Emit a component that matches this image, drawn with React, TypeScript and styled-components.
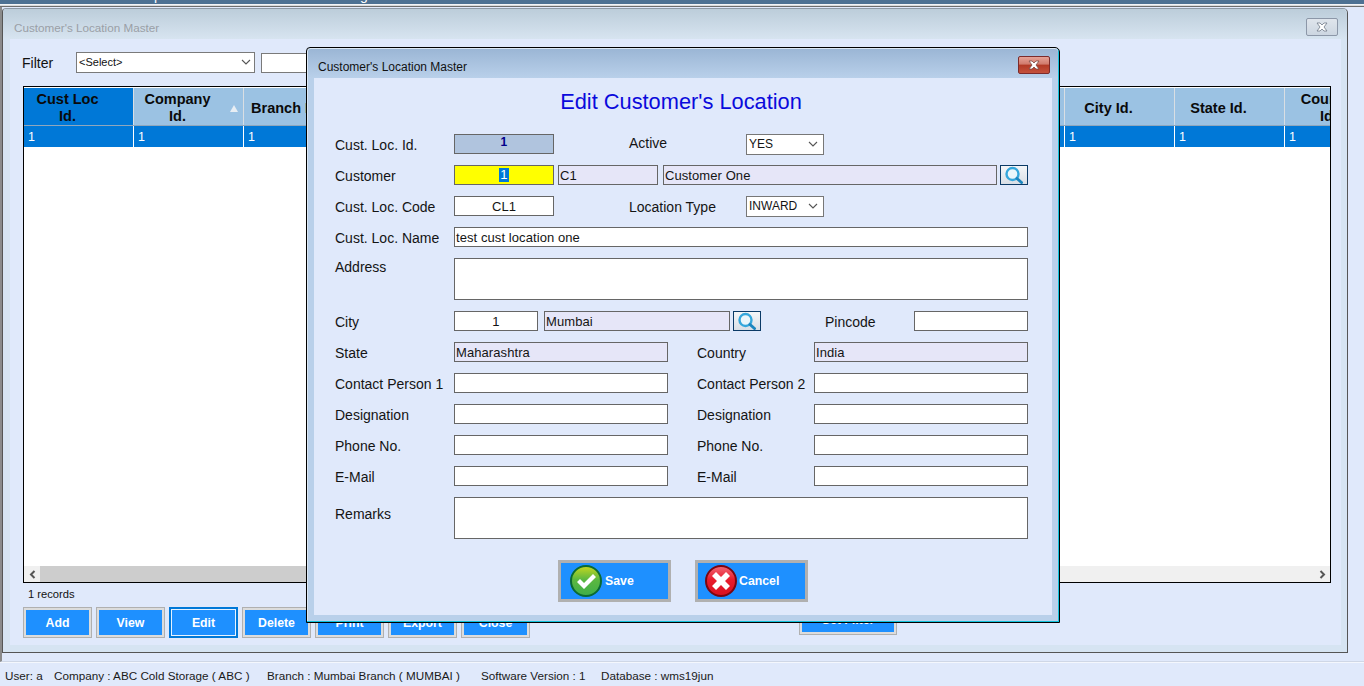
import React from "react";
import styled, { createGlobalStyle } from "styled-components";

const Global = createGlobalStyle`
  html, body { margin: 0; padding: 0; width: 1364px; height: 686px; overflow: hidden; background: #e0e9fb; }
  body, button { font-family: "Liberation Sans", Arial, sans-serif; }
  * { box-sizing: border-box; }
`;

const Page = styled.div`
  width: 1364px; height: 686px; display: flex; flex-direction: column; position: relative; overflow: hidden;
  background: #e0e9fb; color: #111;
`;
const TopStrip = styled.div`
  height: 4px; background: #4d7193; overflow: hidden; color: #fff; font-size: 14px; line-height: 14px; flex: none;
`;
const StripText = styled.div<{ $left: number }>`
  display: flex; margin-top: -12px; height: 16px; padding-left: ${(p) => p.$left}px;
  span { width: 206px; }
`;
const StripEdge = styled.div`
  height: 3px; flex: none; background: linear-gradient(#f2f4f6 0 1px, #d8dadc 1px 2px, #6e6e6e 2px);
`;
const Workspace = styled.div`
  flex: none; height: 655px; border-left: 2px solid #8a8a8a; padding-top: 1px; border-bottom: 1px solid #cfd7e6;
`;
const Window = styled.div`
  width: 1346px; height: 645px; border: 1px solid #555; border-top-color: #8d9aa6; border-radius: 4px 5px 0 0;
  background: #d6e4f2; display: flex; flex-direction: column; padding: 0 6px 7px 7px;
`;
const WindowTitleBar = styled.div`
  height: 30px; flex: none; margin: 0 -6px 0 -7px; padding: 6px 9px 0 11px; display: flex; align-items: center; justify-content: space-between;
  background: linear-gradient(#bccdda, #d7e4f0); border-radius: 4px 5px 0 0;
  font-size: 11.7px; color: #9a9fa6;
`;
const GhostClose = styled.div`
  width: 32px; height: 18px; border: 1px solid #8c97a8; border-radius: 2px; background: linear-gradient(#dfe5ec, #ccd6e1);
  display: flex; align-items: center; justify-content: center; margin-top: -1px;
`;
const WindowBody = styled.div`
  flex: 1; background: #e0e9fb; padding: 13px 9px 0 12px; display: flex; flex-direction: column; min-height: 0;
`;
const FilterRow = styled.div`
  display: flex; align-items: center; height: 21px; font-size: 14px; flex: none;
`;
const FilterLabel = styled.div`
  width: 54px;
`;
const FilterSelect = styled.div`
  width: 179px; height: 21px; border: 1px solid #7a7a7a; background: #fff; font-size: 11px; padding: 0 3px 2px 2px; display: flex; align-items: center; justify-content: space-between;
`;
const FilterInput = styled.div`
  width: 200px; height: 20px; margin-left: 6px; border: 1px solid #7a7a7a; background: #fff;
`;
const GridFrame = styled.div`
  flex: none; height: 497px; margin: 13px 0 0 1px; width: 1308px; border: 1px solid #000; padding-top: 1px; background: #fff; display: flex; flex-direction: column; overflow: hidden;
`;
const HeadRow = styled.div`
  display: flex; height: 38px; flex: none; border-bottom: 1px solid #8fa7bd; background: #9bc2e3;
`;
const HeadCell = styled.div<{ $w: number; $active?: boolean; $pad: number }>`
  width: ${(p) => p.$w}px; flex: none; position: relative; border-right: 1px solid #d9dee3; background: ${(p) => (p.$active ? "#0078d7" : "#9bc2e3")};
  font-size: 14.5px; font-weight: 700; line-height: 17px; text-align: center; display: flex; align-items: center; justify-content: center; color: #0a0a0a; padding: 3px ${(p) => p.$pad}px 0 0; white-space: pre-line; overflow: hidden;
`;
const SortMark = styled.span`
  position: absolute; right: 5px; top: 17px; width: 0; height: 0; border: 4px solid transparent; border-top: 0; border-bottom: 7px solid #e8eef4;
`;
const DataRow = styled.div`
  display: flex; height: 21px; flex: none; background: #0078d7;
`;
const DataCell = styled.div<{ $w: number }>`
  width: ${(p) => p.$w}px; flex: none; border-right: 1px solid #fff; color: #fff; font-size: 12.5px; padding: 4px 0 0 4px;
`;
const GridFill = styled.div`flex: 1;`;
const ScrollBar = styled.div`
  height: 16px; flex: none; background: #f0f0f0; display: flex; align-items: center; justify-content: space-between;
`;
const ScrollThumbZone = styled.div`
  display: flex; align-items: center; height: 16px;
`;
const ScrollThumb = styled.div`
  width: 600px; height: 16px; background: #cdcdcd;
`;
const ScrollArrow = styled.div`
  width: 16px; height: 16px; display: flex; align-items: center; justify-content: center;
`;
const Records = styled.div`
  font-size: 11.2px; height: 24px; padding: 5px 0 0 5px; flex: none; margin-left: 1px; color: #111;
`;
const Footer = styled.div`
  display: flex; align-items: flex-end; gap: 4px; margin-left: 1px; height: 31px;
`;
const ActionButton = styled.button<{ $focus?: boolean; $w?: number; $after?: number; $lift?: number }>`
  width: ${(p) => p.$w ?? 69}px; height: 31px; flex: none; border: ${(p) => (p.$focus ? "2px solid #0078d7" : "1px solid #b0b0b0")};
  box-shadow: ${(p) => (p.$focus ? "inset 0 0 0 1px #e6f2ff" : "inset 0 0 0 2px #dcdcdc")};
  background: #1e90ff; color: #fff; font-weight: 700; font-size: 12.3px; padding: 0;
  margin-left: ${(p) => p.$after ?? 0}px; margin-bottom: ${(p) => p.$lift ?? 0}px;
`;
const StatusBar = styled.div`
  flex: 1; display: flex; align-items: center; font-size: 11.7px; padding: 1px 0 0 5px; color: #1a1a1a; border-top: 1px solid #f4f7fd;
`;
const StatusItem = styled.span<{ $w: number }>`
  width: ${(p) => p.$w}px; flex: none; white-space: nowrap;
`;

const Dialog = styled.div`
  position: absolute; left: 306px; top: 47px; width: 754px; height: 576px; border: 1px solid #000; border-radius: 4px 5px 0 0;
  background: #b9d0ea; box-shadow: inset -1px -1px 0 #12c2dc, inset 1px 1px 0 #dce8f4; display: flex; flex-direction: column; padding: 0 7px 7px 7px;
`;
const DialogTitleBar = styled.div`
  height: 29px; flex: none; margin: 1px -6px 0 -6px; padding: 7px 8px 0 10px; display: flex; align-items: center; justify-content: space-between;
  background: linear-gradient(#9bb6d5, #b9d0ea); font-size: 12px; color: #111; border-radius: 3px 4px 0 0;
`;
const RedClose = styled.div`
  width: 32px; height: 18px; margin-top: -4px; border: 1px solid #7c2b2b; border-radius: 2px; background: linear-gradient(#e6a296 0, #d07a6c 45%, #b23a26 50%, #c4513c 100%);
  display: flex; align-items: center; justify-content: center;
`;
const Form = styled.div`
  flex: 1; background: #e0e9fb; padding: 12px 24px 0 21px; display: flex; flex-direction: column; min-height: 0;
`;
const Heading = styled.h1`
  margin: 0 0 20px; height: 24px; font-size: 21.8px; line-height: 24px; font-weight: 400; color: #0a0adc; text-align: center; padding-right: 1px;
`;
const Rows = styled.div`
  display: flex; flex-direction: column; gap: 11px;
`;
const Row = styled.div<{ $h?: number; $top?: boolean }>`
  display: flex; height: ${(p) => p.$h ?? 20}px; align-items: ${(p) => (p.$top ? "flex-start" : "center")};
`;
const Label = styled.div<{ $w?: number; $at?: number; $lift?: number; $drop?: number }>`
  width: ${(p) => p.$w ?? 119}px; flex: none; margin-left: ${(p) => p.$at ?? 0}px; font-size: 14px; line-height: 16px; white-space: nowrap; color: #141414;
  transform: translateY(${(p) => (p.$drop ?? 1) - (p.$lift ?? 0)}px);
`;
const Field = styled.div<{ $w: number; $h?: number; $tone?: "white" | "lilac" | "yellow" | "steel"; $center?: boolean; $at?: number }>`
  width: ${(p) => p.$w}px; height: ${(p) => p.$h ?? 20}px; flex: none; margin-left: ${(p) => p.$at ?? 0}px;
  border: 1px solid #666;
  background: ${(p) => ({ white: "#fff", lilac: "#e6e6f8", yellow: "#ffff00", steel: "#b0c4de" }[p.$tone ?? "white"])};
  font-size: 13px; letter-spacing: 0.08px; line-height: 20px; padding: 0 1px; white-space: nowrap; overflow: hidden; color: #141414;
  text-align: ${(p) => (p.$center ? "center" : "left")};
`;
const IdValue = styled.span`
  color: #00008b; font-weight: 700; font-size: 12px; position: relative; top: -3px;
`;
const Selected = styled.span`
  display: inline-block; height: 14px; line-height: 14px; vertical-align: 1px; background: #0078d7; color: #fff; padding: 0 1px;
`;
const Combo = styled.div<{ $at?: number }>`
  width: 78px; height: 21px; flex: none; margin-left: ${(p) => p.$at ?? 0}px; border: 1px solid #777; background: #fff; font-size: 12px; padding: 0 5px 0 2px;
  display: flex; align-items: center; justify-content: space-between; color: #141414;
`;
const LookupButton = styled.div<{ $at: number }>`
  width: 28px; height: 20px; flex: none; margin-left: ${(p) => p.$at}px; border: 1px solid #0b3a66; background: linear-gradient(#f4f6f8, #d9dfe6);
  display: flex; align-items: center; justify-content: center;
`;
const DialogActions = styled.div`
  display: flex; gap: 24px; margin: 21px 0 0 223px;
`;
const DialogButton = styled.button<{ $pad: number; $gap: number }>`
  width: 113px; height: 42px; border: 3px solid #b0b0b0; background: #1e90ff; color: #fff; font-weight: 700; font-size: 12.3px; padding: 0 0 0 ${(p) => p.$pad}px;
  display: flex; align-items: center; gap: ${(p) => p.$gap}px;
`;

const X = ({ c = "#fff", s = "#6b7280" }: { c?: string; s?: string }) => (
  <svg width="14" height="10" viewBox="0 0 14 10">
    <path d="M2 1h3l2 2 2-2h3L9 5l3 4H9L7 7 5 9H2l3-4z" fill={c} stroke={s} strokeWidth="0.8" />
  </svg>
);
const Chevron = () => (
  <svg width="10" height="6" viewBox="0 0 10 6"><path d="M1 1l4 4 4-4" fill="none" stroke="#555" strokeWidth="1.1" /></svg>
);
const Lens = () => (
  <svg width="24" height="18" viewBox="0 0 24 18">
    <circle cx="10.5" cy="8" r="6" fill="#eaf6fb" stroke="#35a7dc" strokeWidth="2.4" />
    <path d="M15 12.5l4.5 4" stroke="#1c86bf" strokeWidth="3" strokeLinecap="round" />
  </svg>
);
const SaveIcon = () => (
  <svg width="32" height="32" viewBox="0 0 32 32">
    <defs>
      <linearGradient id="gs" x1="0" y1="0" x2="0" y2="1">
        <stop offset="0" stopColor="#c8d81e" /><stop offset="0.45" stopColor="#5cb840" /><stop offset="1" stopColor="#3fae48" />
      </linearGradient>
    </defs>
    <circle cx="16" cy="16" r="15" fill="url(#gs)" stroke="#0b6a32" strokeWidth="2" />
    <path d="M7 17l3-3 4 4 9-9 3 3-12 12z" fill="#fff" />
  </svg>
);
const CancelIcon = () => (
  <svg width="32" height="32" viewBox="0 0 32 32">
    <defs>
      <linearGradient id="gc" x1="0" y1="0" x2="0" y2="1">
        <stop offset="0" stopColor="#f26a78" /><stop offset="0.45" stopColor="#e81c2c" /><stop offset="1" stopColor="#d81020" />
      </linearGradient>
    </defs>
    <circle cx="16" cy="16" r="15" fill="url(#gc)" stroke="#7a0610" strokeWidth="2" />
    <path d="M11 7l5 5 5-5 4 4-5 5 5 5-4 4-5-5-5 5-4-4 5-5-5-5z" fill="#fff" />
  </svg>
);

const columns: { w: number; title?: string; active?: boolean; sort?: boolean; pad?: number }[] = [
  { w: 110, title: "Cust Loc\nId.", active: true },
  { w: 110, title: "Company\nId.", sort: true },
  { w: 110, title: "Branch Id.", pad: 24 },
  { w: 711 },
  { w: 110, title: "City Id." },
  { w: 110, title: "State Id." },
  { w: 110, title: "Country\nId." },
];

const footerLabels = ["Add", "View", "Edit", "Delete", "Print", "Export", "Close"];

export default function App() {
  return (
    <Page>
      <Global />
      <TopStrip>
        <StripText $left={154}><span>p</span><span>g</span></StripText>
      </TopStrip>
      <StripEdge />
      <Workspace>
        <Window>
          <WindowTitleBar>
            <span>Customer's Location Master</span>
            <GhostClose><X s="#707a88" /></GhostClose>
          </WindowTitleBar>
          <WindowBody>
            <FilterRow>
              <FilterLabel>Filter</FilterLabel>
              <FilterSelect><span>&lt;Select&gt;</span><Chevron /></FilterSelect>
              <FilterInput />
            </FilterRow>
            <GridFrame>
              <HeadRow>
                {columns.map((c, i) => (
                  <HeadCell key={i} $w={c.w} $active={c.active} $pad={c.pad ?? 22}>
                    {c.title}
                    {c.sort && <SortMark />}
                  </HeadCell>
                ))}
              </HeadRow>
              <DataRow>
                {columns.map((c, i) => (
                  <DataCell key={i} $w={c.w}>{c.title ? "1" : ""}</DataCell>
                ))}
              </DataRow>
              <GridFill />
              <ScrollBar>
                <ScrollThumbZone>
                  <ScrollArrow>
                    <svg width="7" height="9" viewBox="0 0 7 9"><path d="M5.5 1L2 4.5 5.5 8" fill="none" stroke="#555" strokeWidth="2" /></svg>
                  </ScrollArrow>
                  <ScrollThumb />
                </ScrollThumbZone>
                <ScrollArrow>
                  <svg width="7" height="9" viewBox="0 0 7 9"><path d="M1.5 1L5 4.5 1.5 8" fill="none" stroke="#555" strokeWidth="2" /></svg>
                </ScrollArrow>
              </ScrollBar>
            </GridFrame>
            <Records>1 records</Records>
            <Footer>
              {footerLabels.map((l) => (
                <ActionButton key={l} $focus={l === "Edit"}>{l}</ActionButton>
              ))}
              <ActionButton $w={98} $after={265} $lift={3}>Set Filter</ActionButton>
            </Footer>
          </WindowBody>
        </Window>
      </Workspace>
      <StatusBar>
        <StatusItem $w={49}>User: a</StatusItem>
        <StatusItem $w={213}>Company : ABC Cold Storage ( ABC )</StatusItem>
        <StatusItem $w={214}>Branch : Mumbai Branch ( MUMBAI )</StatusItem>
        <StatusItem $w={120}>Software Version : 1</StatusItem>
        <StatusItem $w={130}>Database : wms19jun</StatusItem>
      </StatusBar>

      <Dialog>
        <DialogTitleBar>
          <span>Customer's Location Master</span>
          <RedClose><X s="#7a4a44" /></RedClose>
        </DialogTitleBar>
        <Form>
          <Heading>Edit Customer's Location</Heading>
          <Rows>
            <Row>
              <Label>Cust. Loc. Id.</Label>
              <Field $w={100} $tone="steel" $center><IdValue>1</IdValue></Field>
              <Label $w={117} $at={75} $lift={2}>Active</Label>
              <Combo><span>YES</span><Chevron /></Combo>
            </Row>
            <Row>
              <Label>Customer</Label>
              <Field $w={100} $tone="yellow" $center><Selected>1</Selected></Field>
              <Field $w={100} $at={4} $tone="lilac">C1</Field>
              <Field $w={334} $at={5} $tone="lilac">Customer One</Field>
              <LookupButton $at={3}><Lens /></LookupButton>
            </Row>
            <Row>
              <Label>Cust. Loc. Code</Label>
              <Field $w={100} $center>CL1</Field>
              <Label $w={117} $at={75}>Location Type</Label>
              <Combo><span>INWARD</span><Chevron /></Combo>
            </Row>
            <Row>
              <Label>Cust. Loc. Name</Label>
              <Field $w={574}>test cust location one</Field>
            </Row>
            <Row $h={42} $top>
              <Label>Address</Label>
              <Field $w={574} $h={42} />
            </Row>
            <Row>
              <Label>City</Label>
              <Field $w={84} $center>1</Field>
              <Field $w={186} $at={6} $tone="lilac">Mumbai</Field>
              <LookupButton $at={3}><Lens /></LookupButton>
              <Label $w={89} $at={64}>Pincode</Label>
              <Field $w={114} />
            </Row>
            <Row>
              <Label>State</Label>
              <Field $w={214} $tone="lilac">Maharashtra</Field>
              <Label $w={117} $at={29}>Country</Label>
              <Field $w={214} $tone="lilac">India</Field>
            </Row>
            <Row>
              <Label>Contact Person 1</Label>
              <Field $w={214} />
              <Label $w={117} $at={29}>Contact Person 2</Label>
              <Field $w={214} />
            </Row>
            <Row>
              <Label>Designation</Label>
              <Field $w={214} />
              <Label $w={117} $at={29}>Designation</Label>
              <Field $w={214} />
            </Row>
            <Row>
              <Label>Phone No.</Label>
              <Field $w={214} />
              <Label $w={117} $at={29}>Phone No.</Label>
              <Field $w={214} />
            </Row>
            <Row>
              <Label>E-Mail</Label>
              <Field $w={214} />
              <Label $w={117} $at={29}>E-Mail</Label>
              <Field $w={214} />
            </Row>
            <Row $h={42} $top>
              <Label $drop={9}>Remarks</Label>
              <Field $w={574} $h={42} />
            </Row>
          </Rows>
          <DialogActions>
            <DialogButton $pad={9} $gap={3}><SaveIcon />Save</DialogButton>
            <DialogButton $pad={7} $gap={2}><CancelIcon />Cancel</DialogButton>
          </DialogActions>
        </Form>
      </Dialog>
    </Page>
  );
}
